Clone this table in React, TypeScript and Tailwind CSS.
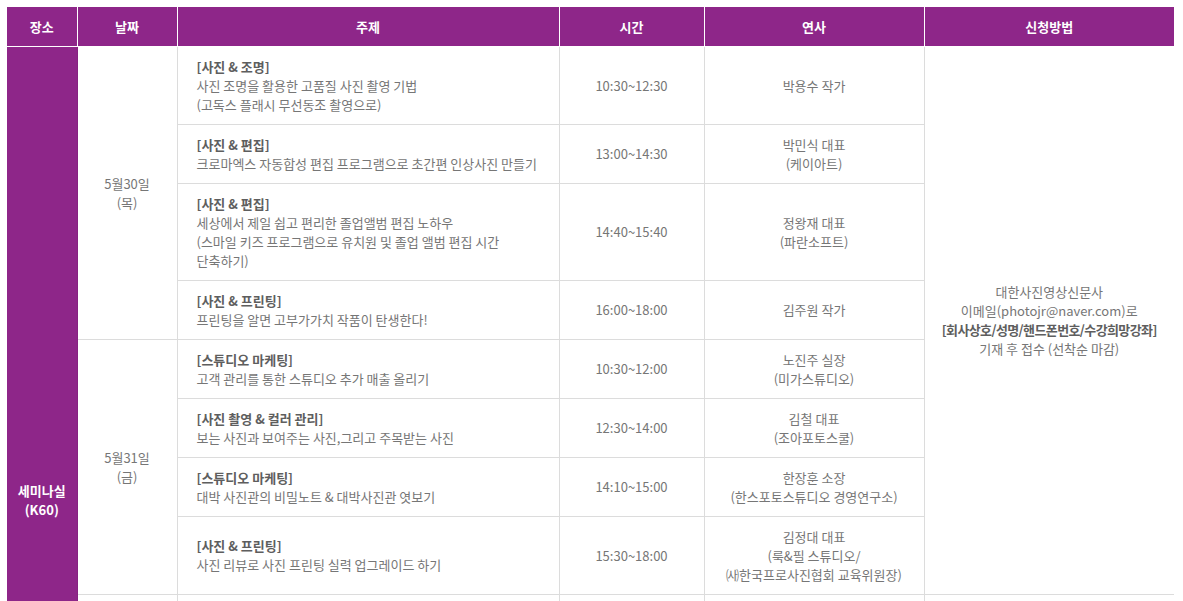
import React from "react";

type Session = {
  title: string;
  desc: string[];
  time: string;
  speaker: string[];
};

const day1: Session[] = [
  {
    title: "[사진 & 조명]",
    desc: ["사진 조명을 활용한 고품질 사진 촬영 기법", "(고독스 플래시 무선동조 촬영으로)"],
    time: "10:30~12:30",
    speaker: ["박용수 작가"],
  },
  {
    title: "[사진 & 편집]",
    desc: ["크로마엑스 자동합성 편집 프로그램으로 초간편 인상사진 만들기"],
    time: "13:00~14:30",
    speaker: ["박민식 대표", "(케이아트)"],
  },
  {
    title: "[사진 & 편집]",
    desc: [
      "세상에서 제일 쉽고 편리한 졸업앨범 편집 노하우",
      "(스마일 키즈 프로그램으로 유치원 및 졸업 앨범 편집 시간",
      "단축하기)",
    ],
    time: "14:40~15:40",
    speaker: ["정왕재 대표", "(파란소프트)"],
  },
  {
    title: "[사진 & 프린팅]",
    desc: ["프린팅을 알면 고부가가치 작품이 탄생한다!"],
    time: "16:00~18:00",
    speaker: ["김주원 작가"],
  },
];

const day2: Session[] = [
  {
    title: "[스튜디오 마케팅]",
    desc: ["고객 관리를 통한 스튜디오 추가 매출 올리기"],
    time: "10:30~12:00",
    speaker: ["노진주 실장", "(미가스튜디오)"],
  },
  {
    title: "[사진 촬영 & 컬러 관리]",
    desc: ["보는 사진과 보여주는 사진,그리고 주목받는 사진"],
    time: "12:30~14:00",
    speaker: ["김철 대표", "(조아포토스쿨)"],
  },
  {
    title: "[스튜디오 마케팅]",
    desc: ["대박 사진관의 비밀노트 & 대박사진관 엿보기"],
    time: "14:10~15:00",
    speaker: ["한장훈 소장", "(한스포토스튜디오 경영연구소)"],
  },
  {
    title: "[사진 & 프린팅]",
    desc: ["사진 리뷰로 사진 프린팅 실력 업그레이드 하기"],
    time: "15:30~18:00",
    speaker: ["김정대 대표", "(룩&필 스튜디오/", "㈔한국프로사진협회 교육위원장)"],
  },
];

const cell = "border-b border-r border-[#dcdcdc] py-[10px] align-middle";

function SessionCells({ s }: { s: Session }) {
  return (
    <>
      <td className={`${cell} pl-[19px] pr-[8px] text-left`}>
        <div className="font-bold text-[#5e5e5e]">{s.title}</div>
        {s.desc.map((d, i) => (
          <div key={i}>{d}</div>
        ))}
      </td>
      <td className={`${cell} text-center`}>{s.time}</td>
      <td className={`${cell} text-center`}>
        {s.speaker.map((d, i) => (
          <div key={i}>{d}</div>
        ))}
      </td>
    </>
  );
}

export default function App() {
  const headers = ["장소", "날짜", "주제", "시간", "연사", "신청방법"];
  const extraRows = [0, 1, 2, 3, 4, 5];
  return (
    <div className="min-h-screen bg-white pl-[7px] pt-[7px]">
      <table
        className="w-[1167px] table-fixed border-collapse text-[13px] leading-[19px] text-[#767676]"
        style={{ fontFamily: '"Noto Sans CJK KR", "Noto Sans", sans-serif' }}
      >
        <colgroup>
          <col className="w-[70px]" />
          <col className="w-[100px]" />
          <col className="w-[382px]" />
          <col className="w-[145px]" />
          <col className="w-[220px]" />
          <col className="w-[250px]" />
        </colgroup>
        <thead>
          <tr className="h-[39px] bg-[#8e2689]">
            {headers.map((h, i) => (
              <th
                key={h}
                className={`border-b border-white text-center font-bold text-white ${
                  i < headers.length - 1 ? "border-r" : ""
                }`}
              >
                {h}
              </th>
            ))}
          </tr>
        </thead>
        <tbody>
          {day1.map((s, i) => (
            <tr key={`d1-${i}`}>
              {i === 0 && (
                <td
                  rowSpan={day1.length + day2.length + extraRows.length}
                  className="border-r border-[#862281] bg-[#8e2689] text-center align-middle font-bold leading-[19px] text-white"
                >
                  <div>세미나실</div>
                  <div>(K60)</div>
                </td>
              )}
              {i === 0 && (
                <td rowSpan={day1.length} className={`${cell} text-center`}>
                  <div>5월30일</div>
                  <div>(목)</div>
                </td>
              )}
              <SessionCells s={s} />
              {i === 0 && (
                <td
                  rowSpan={day1.length + day2.length}
                  className="border-b border-[#dcdcdc] px-0 text-center align-middle"
                >
                  <div>대한사진영상신문사</div>
                  <div>이메일(photojr@naver.com)로</div>
                  <div className="whitespace-nowrap font-bold tracking-[-0.6px] text-[#5e5e5e]">
                    [회사상호/성명/핸드폰번호/수강희망강좌]
                  </div>
                  <div>기재 후 접수 (선착순 마감)</div>
                </td>
              )}
            </tr>
          ))}
          {day2.map((s, i) => (
            <tr key={`d2-${i}`}>
              {i === 0 && (
                <td rowSpan={day2.length} className={`${cell} text-center`}>
                  <div>5월31일</div>
                  <div>(금)</div>
                </td>
              )}
              <SessionCells s={s} />
            </tr>
          ))}
          {extraRows.map((r) => (
            <tr key={`x-${r}`} className="h-[60px]">
              <td className={cell}></td>
              <td className={cell}></td>
              <td className={cell}></td>
              <td className={cell}></td>
              <td className="border-b border-[#dcdcdc]"></td>
            </tr>
          ))}
        </tbody>
      </table>
    </div>
  );
}
